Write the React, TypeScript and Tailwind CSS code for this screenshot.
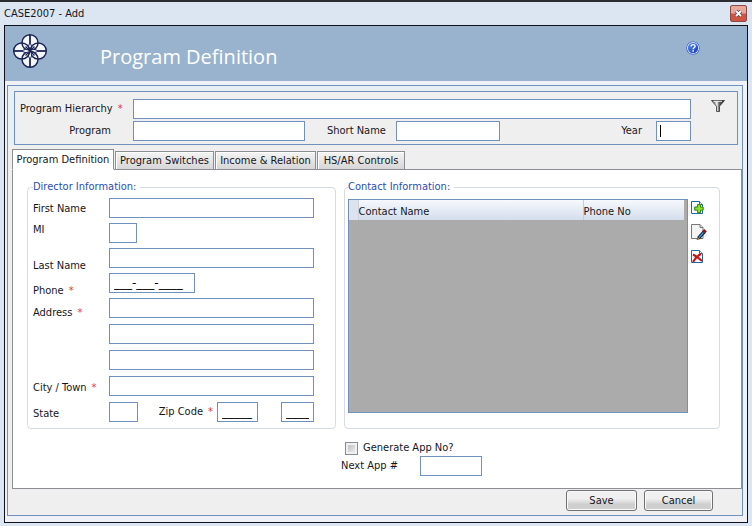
import { useState } from "react";
import type { ReactNode } from "react";

const box = "block h-5 min-w-0 rounded-none border border-[#7090bd] bg-white px-1 leading-4 text-black outline-none";
const field = `${box} text-[11px]`;
const masked = `${box} font-['DejaVu_Sans',sans-serif] text-[12px]`;

function Required() {
  return <span className="ml-[5px] text-[#f03030]">*</span>;
}

function Group({ title, className, children }: { title: string; className: string; children: ReactNode }) {
  return (
    <fieldset className={`min-w-0 rounded-[4px] border border-[#d5dbe5] ${className}`}>
      <legend className="h-3 pr-1 leading-3 text-[#2a4db5]">{title}</legend>
      {children}
    </fieldset>
  );
}

function Logo() {
  const turns = [0, 90, 180, 270];
  return (
    <svg viewBox="0 0 36 36" className="size-9" aria-hidden="true">
      {turns.map((r) => (
        <circle key={r} cx="18" cy="9.7" r="8" fill="#f4f7fb" transform={`rotate(${r} 18 18)`} />
      ))}
      <g fill="none" stroke="#1c2456">
        {turns.map((r) => (
          <g key={r} transform={`rotate(${r} 18 18)`}>
            <circle cx="18" cy="9.7" r="8" strokeWidth="1.5" />
            <path d="M18 2v8.500" strokeWidth="1.8" />
            <path d="M18 10c-2 2.500-2 5.500 0 8c2-2.500 2-5.500 0-8" fill="#f4f7fb" strokeWidth="1" />
            <path d="M18 18l4.500-4.500" strokeWidth="1.2" />
          </g>
        ))}
      </g>
    </svg>
  );
}

function HelpIcon() {
  return (
    <svg viewBox="0 0 14 14" className="size-[14px]" aria-hidden="true">
      <defs>
        <linearGradient id="help" x1="0" y1="0" x2="1" y2="1">
          <stop offset="0" stopColor="#5d8ff0" />
          <stop offset="1" stopColor="#1238b4" />
        </linearGradient>
      </defs>
      <circle cx="7" cy="7" r="6.6" fill="#2a55bd" />
      <circle cx="7" cy="7" r="6" fill="#e9f1ff" />
      <circle cx="7" cy="7" r="5.2" fill="url(#help)" />
      <path d="M5.100 5.600c0-2.600 4-2.600 4-.3c0 1.500-2 1.500-2 2.900" fill="none" stroke="#fff" strokeWidth="1.400" />
      <rect x="6.4" y="9.2" width="1.5" height="1.5" fill="#fff" />
    </svg>
  );
}

function FunnelIcon() {
  return (
    <svg viewBox="0 0 14 12" className="h-3 w-[14px]" aria-hidden="true">
      <defs>
        <linearGradient id="funnel" x1="0" y1="0" x2="1" y2="0">
          <stop offset="0.15" stopColor="#777" />
          <stop offset="0.42" stopColor="#f6f6f6" />
          <stop offset="0.58" stopColor="#666" />
          <stop offset="1" stopColor="#1a1a1a" />
        </linearGradient>
      </defs>
      <path d="M0.500 0.500h13l-5 5.800v5.200h-3v-5.200z" fill="url(#funnel)" stroke="#333" strokeWidth="0.8" />
      <path d="M2.500 1.300h8.500" stroke="#eee" strokeWidth="1" />
    </svg>
  );
}

function Sheet() {
  return (
    <>
      <path d="M0.500 0.500h8l3 3v9h-11z" fill="#fbfdff" stroke="#1f6aa0" />
      <path d="M8.500 0.500v3h3" fill="#dfeaf5" stroke="#1f6aa0" />
      <path d="M2 5.500h5M2 7.500h4M2 9.500h4" stroke="#dde3ea" />
    </>
  );
}

function AddIcon() {
  return (
    <svg viewBox="0 0 13 13" className="size-[13px]" aria-hidden="true">
      <Sheet />
      <path d="M6.500 3.500h3v2.600h2.700v3h-2.700v2.500h-3v-2.500h-2.800v-3h2.800z" fill="#8be02a" stroke="#2f8a10" />
    </svg>
  );
}

function EditIcon() {
  return (
    <svg viewBox="0 0 16 16" className="size-4" aria-hidden="true">
      <path d="M0.500 0.500h8.500l3 3v11h-11.500z" fill="#f4f4f4" stroke="#777" />
      <path d="M9 0.500v3h3" fill="#ddd" stroke="#777" />
      <path d="M7.500 14.200l6-6.700" stroke="#10243f" strokeWidth="3.400" />
      <path d="M8 13.500l5-5.600" stroke="#2f9bdc" strokeWidth="1.400" />
      <path d="M12.500 8.600l2-2.400" stroke="#8c1420" strokeWidth="3.400" />
      <path d="M6 15.800l.8-2.600l2 1.600z" fill="#e0a040" stroke="#222" strokeWidth="0.500" />
    </svg>
  );
}

function DeleteIcon() {
  return (
    <svg viewBox="0 0 13 13" className="size-[13px]" aria-hidden="true">
      <Sheet />
      <path d="M2 4.500c3 1.500 6 4 9 6.500M10 4c-3 1.500-6 4.500-8 8" fill="none" stroke="#c81515" strokeWidth="2.200" />
    </svg>
  );
}

const labels: { text: string; id: string; required?: boolean }[] = [
  { text: "First Name", id: "first" },
  { text: "MI", id: "mi" },
  { text: "Last Name", id: "last" },
  { text: "Phone", id: "phone", required: true },
  { text: "Address", id: "address1", required: true },
  { text: "City / Town", id: "city", required: true },
  { text: "State", id: "state" },
];

function DirectorInformation() {
  return (
    <Group title="Director Information:" className="w-[309px] shrink-0 pr-[21px] pb-[6px] pl-[5px]">
      <div className="flex">
        <div className="grid w-[76px] shrink-0 grid-rows-[21px_36px_25px_22px_75px_26px_16px] pt-2 leading-4">
          {labels.map((l) => (
            <label key={l.id} htmlFor={l.id} className="whitespace-nowrap">
              {l.text}
              {l.required && <Required />}
            </label>
          ))}
        </div>
        <div className="flex min-w-0 flex-1 flex-col gap-[6px] pt-[5px]">
          <div className="flex flex-col gap-[5px]">
            <input id="first" className={`${field} w-full`} />
            <input id="mi" className={`${field} w-7`} />
            <input id="last" className={`${field} w-full`} />
            <input id="phone" defaultValue="___-___-____" className={`${masked} w-[86px]`} />
            <input id="address1" className={`${field} w-full`} />
          </div>
          <input aria-label="Address line 2" className={`${field} w-full`} />
          <input aria-label="Address line 3" className={`${field} w-full`} />
          <input id="city" className={`${field} w-full`} />
          <div className="flex items-center">
            <input id="state" className={`${field} w-[29px]`} />
            <label htmlFor="zip" className="ml-auto pr-1 leading-4 whitespace-nowrap">
              Zip Code
              <Required />
            </label>
            <input id="zip" defaultValue="_____" className={`${masked} w-[41px]`} />
            <input aria-label="Zip extension" defaultValue="____" className={`${masked} ml-[23px] w-[33px]`} />
          </div>
        </div>
      </div>
    </Group>
  );
}

function ContactInformation() {
  return (
    <Group title="Contact Information:" className="flex-1 pr-3 pl-[3px]">
      <div className="flex gap-[3px] pt-[6px]">
        <div className="h-[214px] min-w-0 flex-1 border border-[#7090bd] bg-[#ababab] pr-[3px]">
          <table className="w-full table-fixed border-collapse bg-linear-to-b from-[#f6f9fd] to-[#d5deec] text-left">
            <thead>
              <tr className="h-5">
                <td className="w-[9px] border-r border-[#ccd3df] bg-[#dde3ee] p-0"></td>
                <th className="p-0 pt-[3px] font-normal">Contact Name</th>
                <th className="w-[101px] border-l border-[#c4cddb] p-0 pt-[3px] font-normal">Phone No</th>
              </tr>
            </thead>
          </table>
        </div>
        <div className="flex w-4 shrink-0 flex-col items-start gap-[10px] pt-[2px]">
          <button type="button" aria-label="Add contact"><AddIcon /></button>
          <button type="button" aria-label="Edit contact"><EditIcon /></button>
          <button type="button" aria-label="Delete contact"><DeleteIcon /></button>
        </div>
      </div>
    </Group>
  );
}

const tabs = [
  { name: "Program Definition", width: "w-[102px]" },
  { name: "Program Switches", width: "w-[99px]" },
  { name: "Income & Relation", width: "w-[101px]" },
  { name: "HS/AR Controls", width: "w-[88px]" },
];

function Tabs() {
  const [active, setActive] = useState(0);
  return (
    <div role="tablist" className="relative -mb-px flex items-end gap-px">
      {tabs.map((tab, i) => (
        <button
          key={tab.name}
          type="button"
          role="tab"
          aria-selected={i === active}
          onClick={() => setActive(i)}
          className={`${tab.width} border border-[#8c8e94] whitespace-nowrap ${
            i === active
              ? "h-[21px] border-b-white bg-white"
              : "h-[19px] bg-linear-to-b from-[#f4f4f4] to-[#d6d6d6] shadow-[inset_1px_1px_0_#fff]"
          }`}
        >
          {tab.name}
        </button>
      ))}
    </div>
  );
}

const action =
  "h-[21px] rounded-[3px] border border-[#707070] bg-linear-to-b from-[#f0f0f0] from-40% to-[#cfcfcf] to-70% shadow-[inset_0_0_0_1px_#fafafa]";

export default function App() {
  const [yearFocused, setYearFocused] = useState(false);
  return (
    <div className="flex min-h-screen flex-col border-t-2 border-[#2c2c33] bg-[#dbe6f2] pr-1 pb-[3px] pl-1 font-['DejaVu_Sans_Condensed','DejaVu_Sans',sans-serif] text-[11px] leading-4 text-[#16161c]">
      <div className="flex h-[23px] items-center justify-between">
        <h1>CASE2007 - Add</h1>
        <button
          type="button"
          aria-label="Close"
          className="mr-px flex h-[17px] w-[17px] items-center justify-center rounded-[2px] border border-[#8c4a42] bg-linear-to-b from-[#e8a79b] from-45% to-[#cc5543] to-55%"
        >
          <svg viewBox="0 0 9 9" className="size-[9px]" aria-hidden="true">
            <path d="M2 2l5 5M7 2l-5 5" stroke="#5a4450" strokeWidth="3.400" />
            <path d="M2 2l5 5M7 2l-5 5" stroke="#fff" strokeWidth="1.800" />
          </svg>
        </button>
      </div>

      <div className="flex flex-1 flex-col border border-[#101018] bg-[#f0f1f6]">
        <header className="flex h-[55px] items-start justify-between bg-[#99b3cf] pr-[47px] pl-[7px]">
          <div className="flex items-start gap-[52px] pt-[7px]">
            <Logo />
            <h2 className="pt-2 font-['Open_Sans','Noto_Sans',sans-serif] text-[20px] leading-8 text-white">
              Program Definition
            </h2>
          </div>
          <button type="button" aria-label="Help" className="mt-[15px]"><HelpIcon /></button>
        </header>

        <main className="mt-1 mr-1 mb-[6px] ml-[2px] flex flex-1 flex-col border border-[#7090bd] bg-[#efefef]">
          <div className="bg-[#e9f0f3] px-1 pt-[5px]">
            <section className="ml-[2px] flex h-[54px] border border-[#7090bd] bg-[#efefef] pr-3 pl-[5px]">
              <div className="flex flex-1 flex-col gap-[2px] pt-[7px]">
                <div className="flex items-center">
                  <label htmlFor="hierarchy" className="w-[113px] shrink-0">
                    Program Hierarchy
                    <Required />
                  </label>
                  <input id="hierarchy" className={`${field} flex-1`} />
                </div>
                <div className="flex items-center">
                  <label htmlFor="program" className="w-[113px] shrink-0 pr-[22px] text-right">Program</label>
                  <input id="program" className={`${field} w-[172px]`} />
                  <label htmlFor="short" className="pr-[10px] pl-[22px]">Short Name</label>
                  <input id="short" className={`${field} w-[104px]`} />
                  <label htmlFor="year" className="ml-auto pr-[14px]">Year</label>
                  <div className="relative">
                    <input
                      id="year"
                      onFocus={() => setYearFocused(true)}
                      onBlur={() => setYearFocused(false)}
                      className={`${field} w-[35px]`}
                    />
                    {!yearFocused && <span className="pointer-events-none absolute top-1 left-1 h-3 w-px bg-black" />}
                  </div>
                </div>
              </div>
              <button type="button" aria-label="Filter" className="ml-5 flex h-7 w-[14px] items-center"><FunnelIcon /></button>
            </section>
          </div>

          <div className="flex flex-1 flex-col pt-1 pl-1">
            <Tabs />
            <div className="flex-1 border border-[#8c8e94] bg-white pr-[21px] pb-2 pl-[14px]">
              <div className="flex gap-2 pt-[11px]">
                <DirectorInformation />
                <ContactInformation />
              </div>
              <div className="flex flex-col items-start pt-[11px] pl-[314px]">
                <label className="flex h-4 items-center gap-[5px] pl-1">
                  <input
                    type="checkbox"
                    className="size-[13px] appearance-none border border-[#8a8e94] bg-linear-to-br from-[#b4b8bc] to-[#f4f4f4] shadow-[inset_0_0_0_2px_#f0f0f0] checked:bg-[#3c5fa0]"
                  />
                  Generate App No?
                </label>
                <div className="flex items-center">
                  <label htmlFor="next" className="w-[79px]">Next App #</label>
                  <input id="next" className={`${field} w-[62px]`} />
                </div>
              </div>
            </div>
            <div className="flex justify-end gap-[7px] pt-px pr-[29px] pb-1">
              <button type="button" className={`${action} w-[71px]`}>Save</button>
              <button type="button" className={`${action} w-[69px]`}>Cancel</button>
            </div>
          </div>
        </main>
      </div>
    </div>
  );
}
